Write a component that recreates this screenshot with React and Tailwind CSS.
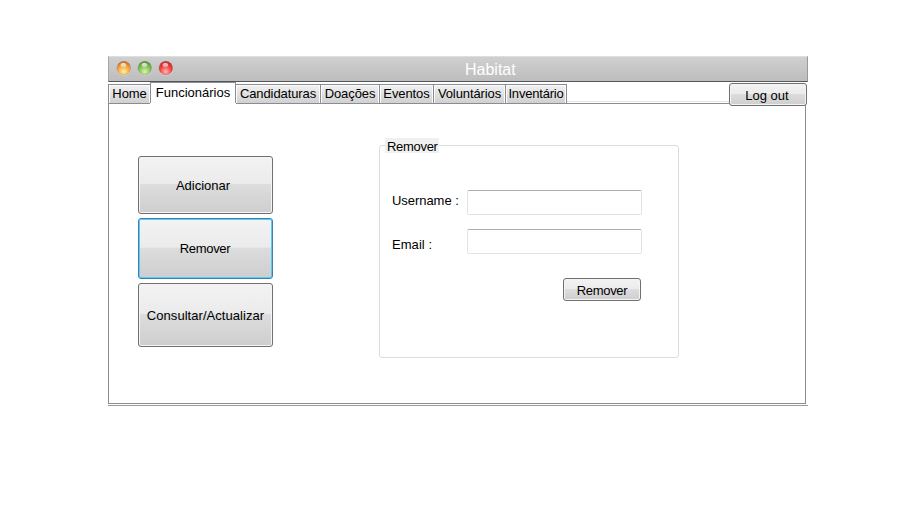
const FACE =
  "bg-[linear-gradient(to_bottom,#f3f3f3_0%,#ebebeb_48%,#dddddd_49%,#cecece_100%)]";

function Button({ children, className = "", border = "border-[#707070]", glow = "shadow-[inset_0_0_0_1px_#f4f4f4]" }) {
  return (
    <button
      className={`flex shrink-0 items-center justify-center rounded-[3px] border whitespace-nowrap ${FACE} ${border} ${glow} ${className}`}
    >
      {children}
    </button>
  );
}

function Tab({ label, width, spacing = "", edge = "border-l" }) {
  return (
    <div
      className={`flex h-[19px] shrink-0 items-center justify-center border-t border-[#898c95] bg-linear-to-b from-[#f2f2f2] to-[#d0d0d0] pb-[2px] whitespace-nowrap shadow-[inset_-1px_1px_0_#fcfcfc,inset_1px_0_0_#fcfcfc] ${edge} ${width} ${spacing}`}
    >
      {label}
    </div>
  );
}

function Light({ id, edge, mid, glow }) {
  return (
    <svg width="15" height="16" viewBox="0 0 15 16">
      <defs>
        <radialGradient id={id} cx="50%" cy="76%" r="82%">
          <stop offset="0" stopColor={glow} />
          <stop offset="0.55" stopColor={mid} />
          <stop offset="1" stopColor={edge} />
        </radialGradient>
        <linearGradient id={id + "-shine"} x1="0" y1="0" x2="0" y2="1">
          <stop offset="0" stopColor="#fff" stopOpacity="0.8" />
          <stop offset="1" stopColor="#fff" stopOpacity="0.4" />
        </linearGradient>
      </defs>
      <circle cx="7.8" cy="8.9" r="7" fill="#e0e0e0" opacity="0.7" />
      <circle cx="7.8" cy="8" r="6.8" fill={`url(#${id})`} stroke={edge} strokeOpacity="0.5" strokeWidth="0.5" />
      <ellipse cx="7.4" cy="5" rx="2.8" ry="2" fill={`url(#${id}-shine)`} />
    </svg>
  );
}

function Field({ label, height, offset }) {
  return (
    <label className={`flex items-start ${height}`}>
      <span className={`w-[75px] shrink-0 whitespace-nowrap ${offset}`}>{label}</span>
      <input className="h-[25px] w-[175px] rounded-[2px] border border-[#e2e3ea] border-t-[#abadb3] bg-white outline-none" />
    </label>
  );
}

export default function App() {
  return (
    <div className="h-[520px] w-[910px] overflow-hidden bg-white pt-[56px] pl-[108px] font-['Liberation_Sans',Arial,sans-serif] text-[13px] leading-[15px] text-black">
      <div className="w-[700px]">
        <header className="flex h-[26px] border-t border-r border-b border-l border-t-[#dedede] border-r-[#999] border-b-[#55565a] border-l-[#a5a5a5] bg-linear-to-b from-[#d0d0d0] to-[#bdbdbd] pl-[7px]">
          <div className="flex w-[63px] shrink-0 gap-[6px] pt-[3px]">
            <Light id="amber" edge="#a85a2c" mid="#f0a43e" glow="#fff09c" />
            <Light id="green" edge="#4f7f3c" mid="#80bb55" glow="#daf5a8" />
            <Light id="red" edge="#a5282e" mid="#f03c3a" glow="#ffb8ac" />
          </div>
          <h1 className="pt-[4px] pl-[286px] text-[16px] leading-[18px] text-white">Habitat</h1>
        </header>

        <nav className="flex h-[22px] items-end">
          <div className="flex h-[20px] shrink-0 items-start border-b border-[#898c95]">
            <Tab label="Home" width="w-[42px]" spacing="tracking-[-0.1px]" />
          </div>
          <div className="flex h-[21px] w-[86px] shrink-0 -translate-y-px justify-center border-x border-t border-[#898c95] bg-white pt-[2px] whitespace-nowrap">
            Funcionários
          </div>
          <div className="flex h-[20px] shrink-0 items-start border-b border-[#898c95]">
            <Tab label="Candidaturas" width="w-[84px]" spacing="tracking-[-0.1px]" edge="border-l-0" />
            <Tab label="Doações" width="w-[59px]" spacing="tracking-[-0.1px]" />
            <Tab label="Eventos" width="w-[54px]" spacing="tracking-[-0.1px]" />
            <Tab label="Voluntários" width="w-[72px]" spacing="tracking-[-0.1px]" />
            <Tab label="Inventário" width="w-[62px]" spacing="tracking-[-0.2px]" edge="border-x" />
          </div>
          <div className="h-[3px] w-[162px] border-t border-b border-t-[#e3e3e3] border-b-[#898c95]" />
          <div className="mt-[1px] h-[21px] w-[79px] self-start">
            <Button className="h-[23px] w-[78px] pt-[1px] pr-[2px]">Log out</Button>
          </div>
        </nav>

        <main className="flex h-[300px] w-[698px] border-r border-b border-l border-[#898c95]">
          <div className="flex w-[270px] flex-col pt-[52px] pl-[29px]">
            <Button className="h-[58px] w-[135px] pt-px pr-[5px]">Adicionar</Button>
            <Button
              className="mt-[4px] h-[61px] w-[135px] pr-px pb-px tracking-[-0.3px]"
              border="border-[#3c7fb1]"
              glow="shadow-[inset_0_0_0_1px_#55cdf4]"
            >
              Remover
            </Button>
            <Button className="mt-[4px] h-[64px] w-[135px] tracking-[0.05px]">Consultar/Actualizar</Button>
          </div>

          <fieldset className="mt-[34px] h-[220px] w-[300px] rounded-[3px] border border-[#d5dfe5] pl-[12px]">
            <legend className="-ml-[7px] h-[15px] w-[54px] bg-[#f0f0f0] px-[2px] leading-[17px] tracking-[-0.3px]">
              Remover
            </legend>
            <div className="pt-[37px]">
              <Field label="Username :" height="h-[39px]" offset="pt-[3px] tracking-[-0.05px]" />
              <Field label="Email :" height="h-[49px]" offset="pt-[8px] tracking-[0.05px]" />
              <Button className="ml-[171px] h-[23px] w-[78px] pt-[1px] tracking-[-0.3px]">Remover</Button>
            </div>
          </fieldset>
        </main>
        <div className="mt-[1px] h-px bg-[#999]" />
      </div>
    </div>
  );
}
